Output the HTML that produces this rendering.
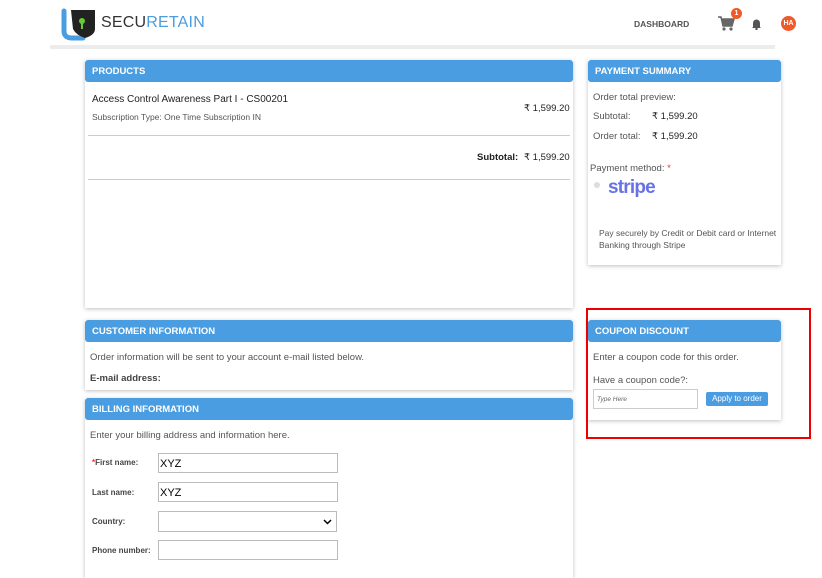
<!DOCTYPE html>
<html><head><style>
*{box-sizing:border-box;margin:0;padding:0}
body{width:822px;height:572px;background:#fff;font-family:"Liberation Sans",Arial,sans-serif;color:#333;position:relative;overflow:hidden}
.a{position:absolute}
.panel{position:absolute;background:#fff;box-shadow:0 1px 4px rgba(0,0,0,.25)}
.hd{position:absolute;left:0;right:0;top:0;height:22px;background:#4a9de0;color:#fff;font-size:9.5px;font-weight:bold;padding:6px 7px;border-radius:3px}
.t{position:absolute;font-size:9.5px;color:#555;white-space:nowrap}
input{position:absolute;border:1px solid #bbb;background:#fff;height:20px}
</style></head><body>
<div class="a" style="left:50px;top:45px;width:725px;height:4px;background:#ececec"></div>
<svg class="a" style="left:61px;top:7px" width="38" height="34" viewBox="0 0 38 34">
<path d="M3 4 V24 Q3 31 11 31 H22" stroke="#4a9de0" stroke-width="5" fill="none" stroke-linecap="round"/>
<path d="M10 3 H34 V22 Q34 28 24 31 Q15 28 12 22 Z" fill="#222"/>
<circle cx="21" cy="14" r="3" fill="#6c3"/><rect x="20" y="15" width="2" height="7" fill="#6c3"/>
</svg>
<div class="a" style="left:101px;top:14px;font-size:16px;letter-spacing:.2px"><span style="color:#333">SECU</span><span style="color:#4a9de0">RETAIN</span></div>
<div class="t" style="left:634px;top:19px;font-size:8.5px;font-weight:bold;color:#555">DASHBOARD</div>
<svg class="a" style="left:717px;top:15px" width="18" height="17" viewBox="0 0 18 17"><path d="M1 2h3l2 9h9l2-7H5" fill="#666" stroke="#666" stroke-width="1.5"/><circle cx="7" cy="14" r="1.6" fill="#666"/><circle cx="14" cy="14" r="1.6" fill="#666"/></svg>
<div class="a" style="left:731px;top:8px;width:11px;height:11px;border-radius:50%;background:#f05a28;color:#fff;font-size:7px;font-weight:bold;text-align:center;line-height:11px">1</div>
<svg class="a" style="left:751px;top:18px" width="11" height="12" viewBox="0 0 11 12"><path d="M2 9V5a3.5 3.5 0 017 0v4l1 1H1z" fill="#555"/><circle cx="5.5" cy="11" r="1.2" fill="#555"/></svg>
<div class="a" style="left:781px;top:16px;width:15px;height:15px;border-radius:50%;background:#f05a28;color:#fff;font-size:7px;font-weight:bold;text-align:center;line-height:15px">HA</div>

<div class="panel" style="left:85px;top:60px;width:488px;height:248px">
<div class="hd">PRODUCTS</div>
<div class="t" style="left:7px;top:34px;font-size:10px;color:#222">Access Control Awareness Part I - CS00201</div>
<div class="t" style="left:7px;top:52px;font-size:8.5px">Subscription Type: One Time Subscription IN</div>
<div class="t" style="left:439px;top:43px;color:#222">₹ 1,599.20</div>
<div class="a" style="left:3px;right:3px;top:75px;border-top:1px solid #ccc"></div>
<div class="t" style="left:392px;top:92px;font-weight:bold;color:#222">Subtotal:</div>
<div class="t" style="left:439px;top:92px;color:#222">₹ 1,599.20</div>
<div class="a" style="left:3px;right:3px;top:119px;border-top:1px solid #ccc"></div>
</div>

<div class="panel" style="left:588px;top:60px;width:193px;height:205px">
<div class="hd">PAYMENT SUMMARY</div>
<div class="t" style="left:5px;top:32px">Order total preview:</div>
<div class="t" style="left:5px;top:51px">Subtotal:</div><div class="t" style="left:64px;top:51px;color:#222">₹ 1,599.20</div>
<div class="t" style="left:5px;top:71px">Order total:</div><div class="t" style="left:64px;top:71px;color:#222">₹ 1,599.20</div>
<div class="t" style="left:2px;top:103px">Payment method: <span style="color:#e33">*</span></div>
<div class="a" style="left:6px;top:122px;width:6px;height:6px;border-radius:50%;background:#ddd"></div>
<div class="a" style="left:20px;top:117px;font-size:19px;font-weight:bold;color:#6772e5;letter-spacing:-.8px">stripe</div>
<div class="t" style="left:11px;top:167px;font-size:8.5px;line-height:12px;white-space:normal;width:180px">Pay securely by Credit or Debit card or Internet Banking through Stripe</div>
</div>

<div class="panel" style="left:85px;top:320px;width:488px;height:70px">
<div class="hd">CUSTOMER INFORMATION</div>
<div class="t" style="left:5px;top:32px">Order information will be sent to your account e-mail listed below.</div>
<div class="t" style="left:5px;top:53px;font-weight:bold;color:#444">E-mail address:</div>
</div>

<div class="panel" style="left:85px;top:398px;width:488px;height:180px">
<div class="hd">BILLING INFORMATION</div>
<div class="t" style="left:5px;top:32px">Enter your billing address and information here.</div>
<div class="t" style="left:7px;top:60px;font-size:8px;font-weight:bold;color:#444"><span style="color:#e33">*</span>First name:</div>
<input style="left:73px;top:55px;width:180px"><div class="t" style="left:75px;top:60px;font-size:11px;color:#000">XYZ</div>
<div class="t" style="left:7px;top:90px;font-size:8px;font-weight:bold;color:#444">Last name:</div>
<input style="left:73px;top:84px;width:180px"><div class="t" style="left:75px;top:89px;font-size:11px;color:#000">XYZ</div>
<div class="t" style="left:7px;top:119px;font-size:8px;font-weight:bold;color:#444">Country:</div>
<div class="a" style="left:73px;top:113px;width:179px;height:21px;border:1px solid #bbb"></div>
<svg class="a" style="left:238px;top:121px" width="9" height="6"><path d="M1 1l3.5 3.5L8 1" stroke="#000" stroke-width="1.5" fill="none"/></svg>
<div class="t" style="left:7px;top:148px;font-size:8px;font-weight:bold;color:#444">Phone number:</div>
<input style="left:73px;top:142px;width:180px">
</div>

<div class="panel" style="left:588px;top:320px;width:193px;height:100px">
<div class="hd">COUPON DISCOUNT</div>
<div class="t" style="left:5px;top:32px">Enter a coupon code for this order.</div>
<div class="t" style="left:5px;top:55px">Have a coupon code?:</div>
<div class="a" style="left:5px;top:69px;width:105px;height:20px;border:1px solid #ccc;font-size:6.5px;font-style:italic;color:#666;padding:6px 3px">Type Here</div>
<div class="a" style="left:118px;top:72px;width:62px;height:14px;background:#4a9de0;border-radius:2px;color:#fff;font-size:8px;text-align:center;line-height:14px">Apply to order</div>
</div>
<div class="a" style="left:586px;top:308px;width:225px;height:131px;border:2px solid #e00"></div>
</body></html>
